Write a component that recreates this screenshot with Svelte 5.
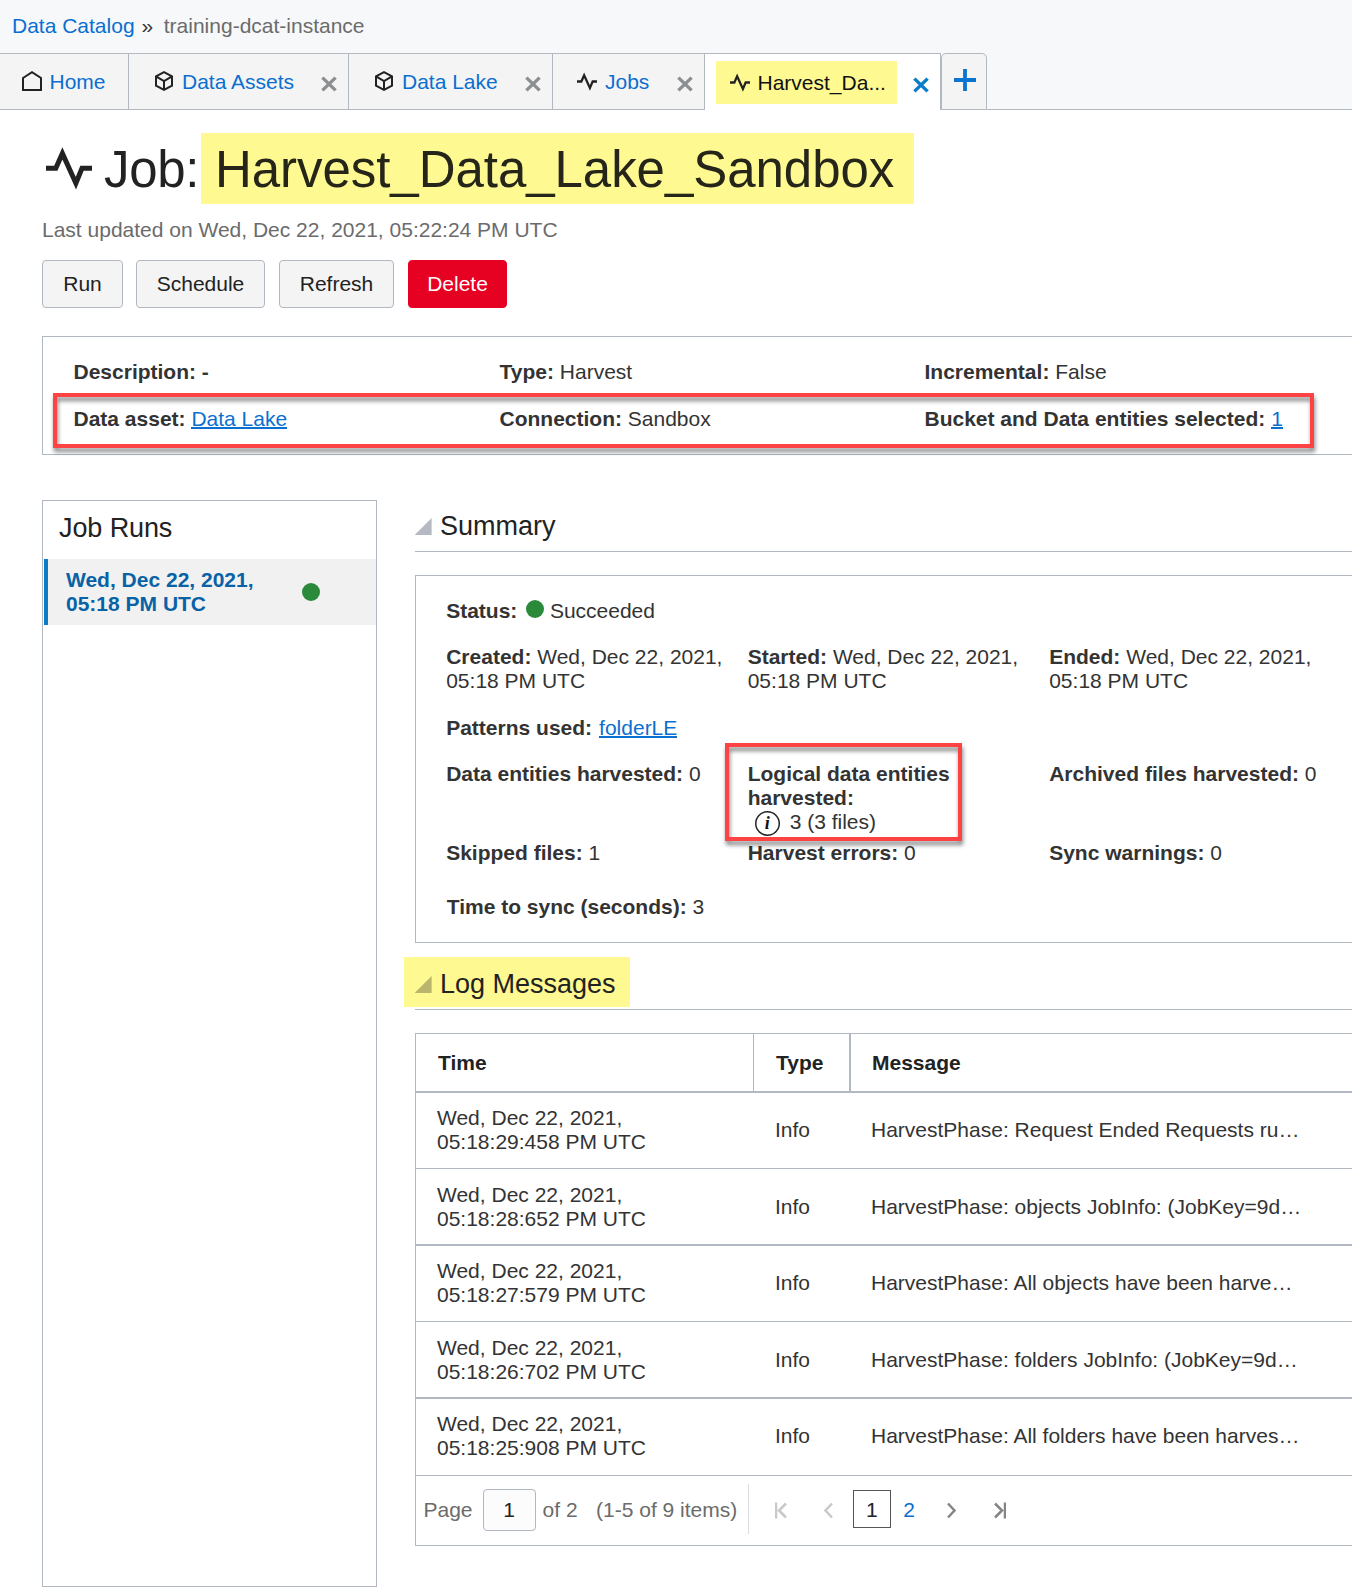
<script>
  const tabs = [
    { icon: 'cube', label: 'Data Assets', width: 220 },
    { icon: 'cube', label: 'Data Lake', width: 204 },
    { icon: 'pulse', label: 'Jobs', width: 152 },
  ];
  const logs = [
    ['05:18:29:458 PM UTC', 'HarvestPhase: Request Ended Requests ru…'],
    ['05:18:28:652 PM UTC', 'HarvestPhase: objects JobInfo: (JobKey=9d…'],
    ['05:18:27:579 PM UTC', 'HarvestPhase: All objects have been harve…'],
    ['05:18:26:702 PM UTC', 'HarvestPhase: folders JobInfo: (JobKey=9d…'],
    ['05:18:25:908 PM UTC', 'HarvestPhase: All folders have been harves…'],
  ];
</script>

{#snippet cube()}
  <svg class="cube" width="20" height="20" viewBox="0 0 20 20" fill="none" stroke="#222" stroke-width="2"><path d="M10 1.2 18 5.4V14.6L10 18.8 2 14.6V5.4ZM2 5.4 10 10.2 18 5.4M10 10.2V18.8" /></svg>
{/snippet}
{#snippet pulse()}
  <svg class="pulse" width="20" height="19" viewBox="0 0 46 43" fill="none" stroke="#222" stroke-width="5.2"><path d="M0 21.5H10L16.4 7 29.7 36.5 36 21.5H46" /></svg>
{/snippet}
{#snippet cross(color)}
  <svg class="cross" width="16" height="16" viewBox="0 0 16 16" fill="none" stroke={color} stroke-width="3.4"><path d="M1.4 1.6 14.6 14.4M14.6 1.6 1.4 14.4" /></svg>
{/snippet}

<main>
  <nav class="crumbs"><a href="#catalog">Data Catalog</a><i>»</i><span>training-dcat-instance</span></nav>
  <div class="tabs">
    <div class="tab home">
      <svg width="20" height="20" viewBox="0 0 20 20" fill="none" stroke="#222" stroke-width="2"><path d="M1 7 10 1.2 19 7V19H1Z" /></svg>
      <a href="#home">Home</a>
    </div>
    {#each tabs as t}
      <div class="tab" style="width:{t.width}px">
        {#if t.icon === 'cube'}{@render cube()}{:else}{@render pulse()}{/if}
        <a href="#tab">{t.label}</a>
        {@render cross('#8c8f91')}
      </div>
    {/each}
    <div class="tab active">
      <div class="mark">{@render pulse()}<span>Harvest_Da...</span></div>
      {@render cross('#0a7bc8')}
    </div>
    <button class="add" aria-label="Add tab"><svg width="22" height="22" viewBox="0 0 22 22" stroke="#0a74d0" stroke-width="3.8"><path d="M0 11H22M11 0V22" /></svg></button>
    <div class="rest"></div>
  </div>

  <h1>
    <svg width="46" height="43" viewBox="0 0 46 43" fill="none" stroke="#222" stroke-width="5"><path d="M0 21.3H9.8L16.4 6.4 29.9 36.2 36 21.3H46" /></svg>
    <span class="kind">Job:</span><span class="title">Harvest_Data_Lake_Sandbox</span>
  </h1>
  <p class="updated">Last updated on Wed, Dec 22, 2021, 05:22:24 PM UTC</p>
  <div class="actions">
    <button class="run">Run</button><button class="schedule">Schedule</button><button class="refresh">Refresh</button><button class="delete">Delete</button>
  </div>

  <section class="details">
    <div><b>Description: -</b></div>
    <div><b>Type:</b> Harvest</div>
    <div><b>Incremental:</b> False</div>
    <div><b>Data asset:</b> <a href="#lake">Data Lake</a></div>
    <div><b>Connection:</b> Sandbox</div>
    <div><b>Bucket and Data entities selected:</b> <a href="#entities">1</a></div>
    <div class="callout wide"></div>
  </section>

  <div class="columns">
    <aside>
      <h2>Job Runs</h2>
      <div class="jobrun"><b>Wed, Dec 22, 2021,<br />05:18 PM UTC</b><span class="dot"></span></div>
    </aside>
    <div class="content">
      <header><h2><span class="tri"></span>Summary</h2></header>
      <section class="summary">
        <div class="status"><b>Status:</b><span class="dot"></span>Succeeded</div>
        <div class="grid dates">
          <div><b>Created:</b> Wed, Dec 22, 2021,<br />05:18 PM UTC</div>
          <div><b>Started:</b> Wed, Dec 22, 2021,<br />05:18 PM UTC</div>
          <div><b>Ended:</b> Wed, Dec 22, 2021,<br />05:18 PM UTC</div>
        </div>
        <div class="patterns"><b>Patterns used:</b> <a href="#folder">folderLE</a></div>
        <div class="grid counts">
          <div><b>Data entities harvested:</b> 0</div>
          <div class="logical">
            <b>Logical data entities<br />harvested:</b>
            <div class="files"><span class="info">i</span>3 (3 files)</div>
            <div class="callout small"></div>
          </div>
          <div><b>Archived files harvested:</b> 0</div>
        </div>
        <div class="grid skipped">
          <div><b>Skipped files:</b> 1</div>
          <div><b>Harvest errors:</b> 0</div>
          <div><b>Sync warnings:</b> 0</div>
        </div>
        <div class="sync"><b>Time to sync (seconds):</b> 3</div>
      </section>
      <header class="loghead"><h2><span class="tri"></span>Log Messages</h2></header>
      <section class="table">
        <div class="row head"><div>Time</div><div>Type</div><div>Message</div></div>
        {#each logs as [time, message], i}
          <div class="row" class:thick={i % 2 === 1} class:final={i === 4}><div>Wed, Dec 22, 2021,<br />{time}</div><div>Info</div><div>{message}</div></div>
        {/each}
        <footer>
          <span>Page</span><span class="page">1</span><span class="of">of 2</span><span class="items">(1-5 of 9 items)</span>
          <div class="pager">
            <svg class="off first" width="12" height="17" viewBox="0 0 12 17"><path d="M1 .5V16.5M11 1.5 4 8.5 11 15.5" /></svg>
            <svg class="off prev" width="9" height="17" viewBox="0 0 9 17"><path d="M8 1.5 1.5 8.5 8 15.5" /></svg>
            <span class="current">1</span><a href="#2">2</a>
            <svg class="next" width="9" height="17" viewBox="0 0 9 17"><path d="M1 1.5 7.5 8.5 1 15.5" /></svg>
            <svg class="last" width="12" height="17" viewBox="0 0 12 17"><path d="M1 1.5 8 8.5 1 15.5M11 .5V16.5" /></svg>
          </div>
        </footer>
      </section>
    </div>
  </div>
</main>

<style>
  :global(body) { background: #fff; overflow: hidden; }
  main { width: 1352px; height: 1596px; overflow: hidden; font: 21px/24px "Liberation Sans", Arial, sans-serif; color: #333; }
  main :global(*) { box-sizing: border-box; }
  svg { display: block; flex: none; }
  a { color: #0a6fd0; text-decoration: none; }
  h1, h2, p { margin: 0; font-weight: 400; }
  button { font: inherit; color: #222; padding: 0; }

  .crumbs { height: 53px; background: #f7f8fa; padding: 14px 0 0 12px; display: flex; color: #6b6b6b; white-space: pre; }
  .crumbs i { font-style: normal; color: #333; margin: 0 10.5px 0 7px; }
  .tabs { display: flex; height: 57px; background: #f7f8fa; }
  .tab { display: flex; align-items: flex-start; border: solid #b1b8c1; border-width: 1px 1px 1px 0; background: #f4f4f4; padding: 16px 11.5px 0 24px; }
  .tab a { line-height: 24px; margin-left: 9px; }
  .tab.home { width: 129px; padding-left: 22px; }
  .tab.home a { margin-left: 7.5px; }
  .home svg { margin-top: 1px; }
  .cube { margin: 1px -1px 0 1px; }
  .pulse { margin-top: 2px; }
  .pulse + a { margin-left: 8px; }
  .cross { margin: 5.5px 0 0 auto; }
  .tab.active { width: 236px; background: #fff; border-bottom: 0; padding: 7px 11.5px 0 11px; }
  .active .cross { margin-top: 15.5px; }
  .mark { display: flex; width: 181px; height: 43px; background: #fef990; padding: 10px 0 0 14px; color: #111; }
  .mark span { margin-left: 7.5px; }
  .add { width: 46px; border: 1px solid #b1b8c1; border-radius: 5px 5px 0 0; background: #f4f4f4; padding: 0 0 3px 11.5px; }
  .rest { flex: 1; border-bottom: 1px solid #b1b8c1; }

  h1 { display: flex; margin: 23px 0 0 46px; height: 71px; font-size: 51px; line-height: 73px; letter-spacing: -.05px; color: #222; }
  h1 svg { margin-top: 14px; }
  .kind { margin-left: 12px; width: 97px; letter-spacing: -.3px; }
  .title { background: #fef990; width: 713px; padding-left: 14px; color: #26251a; }
  .updated { margin: 14px 0 0 42px; color: #6b6b6b; }
  .actions { display: flex; margin: 18px 0 0 42px; height: 48px; }
  .actions button { border: 1px solid #b1b8c1; border-radius: 4px; background: #f4f4f4; }
  .actions .run { width: 81px; }
  .actions .schedule { width: 129px; margin-left: 13px; }
  .actions .refresh { width: 115px; margin-left: 14px; }
  .actions .delete { width: 99px; margin-left: 14px; background: #e60021; border-color: #e60021; color: #fff; }

  .details { position: relative; margin: 28px 0 0 42px; height: 119px; width: 1330px; border: 1px solid #b1b8c1; padding: 23px 0 0 30.5px; display: grid; grid-template-columns: 426px 425px 400px; grid-template-rows: 47px 24px; }
  .details a, .summary a { border-bottom: 2px solid #0a6fd0; line-height: 17px; display: inline-block; }
  .callout { position: absolute; border: 4px solid #fd4343; filter: drop-shadow(1px 4px 2px rgba(0, 0, 0, .48)); }
  .wide { left: 10px; top: 56px; width: 1261px; height: 55px; }

  .columns { display: flex; margin: 45px 0 0 42px; }
  aside { width: 335px; height: 1087px; border: 1px solid #b1b8c1; flex: none; }
  h2 { font-size: 27px; line-height: 32px; color: #222; }
  aside h2 { padding: 11px 0 0 16px; height: 58px; letter-spacing: -.1px; }
  .jobrun { height: 66px; margin-left: 1px; border-left: 4px solid #0a7bc8; background: #f1f1f1; padding-left: 18px; display: flex; align-items: center; color: #0a62a6; }
  .jobrun b { width: 236px; }
  .dot { width: 18px; height: 18px; border-radius: 50%; background: #2b8a3a; flex: none; display: inline-block; }
  .content { margin-left: 38px; width: 960px; flex: none; }
  header { height: 52px; border-bottom: 1px solid #b1b8c1; padding-top: 10px; }
  header h2 { display: flex; }
  .tri { width: 17px; height: 17px; margin: 8px 8.4px 0 -.4px; background: #b4b9c3; clip-path: polygon(100% 0, 100% 100%, 0 100%); }
  .summary { margin-top: 23px; height: 368px; border: 1px solid #b1b8c1; padding: 23px 0 0 30.2px; }
  .status { display: flex; height: 46px; }
  .status .dot { margin: 1px 6px 0 8.5px; }
  .grid { display: grid; grid-template-columns: 301.5px 301.5px 340px; }
  .dates { height: 71px; }
  .patterns { height: 46px; }
  .patterns a { margin-left: 1.2px; }
  .counts { height: 79px; }
  .skipped { height: 54px; }
  .sync { padding-left: .5px; }
  .logical { position: relative; }
  .files { display: flex; }
  .info { width: 25px; height: 25px; box-shadow: inset 0 0 0 1.5px #222; border-radius: 50%; margin: 1px 10px 0 7px; text-align: center; font: italic bold 18px/24px "Liberation Serif", serif; color: #111; }
  .small { left: -23px; top: -19px; width: 237px; height: 98px; }

  .loghead { margin: 14px 0 0 -11px; height: 53px; padding: 0; border: 0; background: linear-gradient(#b1b8c1, #b1b8c1) 11px 52px / 100% 1px no-repeat; }
  .loghead h2 { width: 226px; height: 50px; background: #fef990; padding: 11px 0 0 11px; }
  .loghead .tri { background: #b9b56d; }
  .table { margin-top: 23px; width: 960px; height: 513px; border: 1px solid #b1b8c1; }
  .row { display: grid; grid-template-columns: 338px 97px 1fr; height: 76px; border-bottom: 1px solid #b1b8c1; align-items: center; padding-bottom: 1px; }
  .row.thick { height: 77px; border-bottom-width: 2px; padding-bottom: 0; }
  .row.final { height: 77px; padding-bottom: 2px; }
  .row div:first-child { padding-left: 21px; }
  .row div + div { padding-left: 21px; }
  .row div:last-child { padding-left: 20px; }
  .row.head { height: 59px; border-bottom-width: 2px; padding: 0; font-weight: 700; color: #222; align-items: stretch; line-height: 57px; }
  .head div { border-right: 1px solid #b1b8c1; }
  .head div:first-child { padding-left: 22px; }
  .head div + div { padding-left: 22px; border-right-width: 2px; }
  .head div:last-child { padding-left: 21px; }
  footer { display: flex; align-items: center; height: 66px; padding-left: 7.5px; color: #6b6b6b; white-space: nowrap; }
  footer > span { padding-top: 2px; }
  .page { width: 53px; height: 42px; border: 1px solid #b1b8c1; border-radius: 4px; background: #fcfcfc; text-align: center; line-height: 38px; margin: 2px 7px 0 10px; color: #222; }
  footer > .page { padding-top: 1px; }
  .items { margin-left: 18.5px; }
  .pager { display: flex; align-items: center; height: 50px; border-left: 1px solid #d9dde1; margin-left: 10.5px; }
  .pager a { padding-top: 2px; }
  .pager svg { fill: none; stroke: #858585; stroke-width: 2.5; margin-top: 3px; }
  .pager svg.off { stroke: #c8c8c8; }
  .pager .first { margin-left: 26px; }
  .pager .prev { margin-left: 37.5px; }
  .current { width: 38px; height: 38px; border: 1px solid #555; color: #222; text-align: center; line-height: 38px; margin: 0 12.5px 0 19.5px; }
  .pager .next { margin-left: 32px; }
  .pager .last { margin-left: 38px; }
</style>
